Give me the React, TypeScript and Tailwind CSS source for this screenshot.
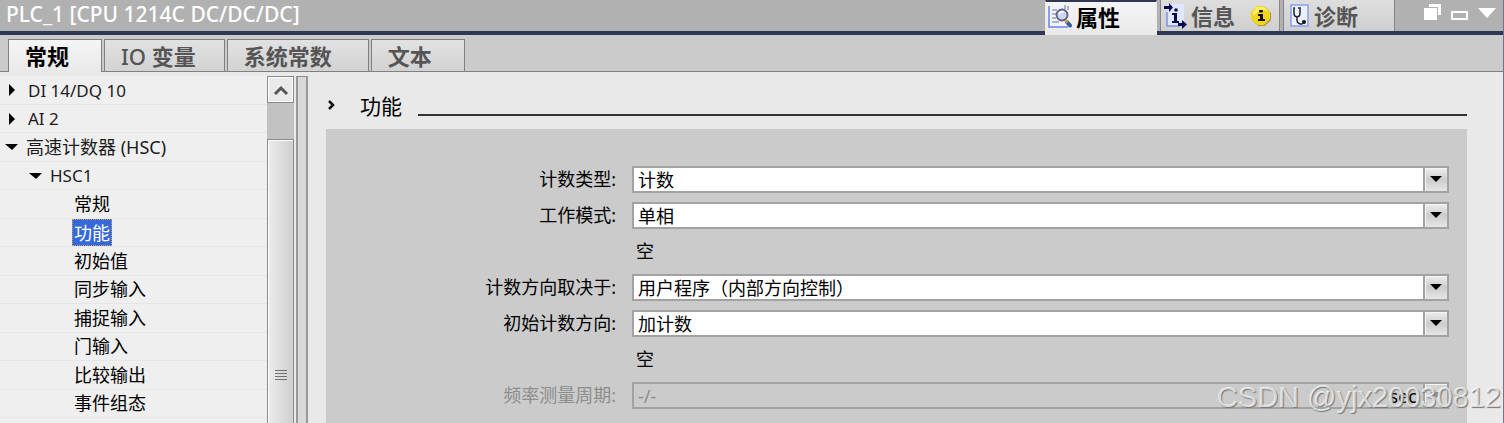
import React from 'react';
import clsx from 'clsx';

interface TreeItem {
  label: string;
  indent: string;
  arrow?: 'right' | 'down';
  latin?: boolean;
  selected?: boolean;
}

interface Field {
  id: string;
  label?: string;
  value: string;
  unit?: string;
  disabled?: boolean;
}

const pageTabs = [
  { label: '常规', padding: 'pl-4 pr-8', active: true },
  { label: 'IO 变量', padding: 'pl-4 pr-7' },
  { label: '系统常数', padding: 'pl-4 pr-9' },
  { label: '文本', padding: 'pl-4 pr-8' },
];

const treeItems: TreeItem[] = [
  { label: 'DI 14/DQ 10', indent: 'pl-2', arrow: 'right', latin: true },
  { label: 'AI 2', indent: 'pl-2', arrow: 'right', latin: true },
  { label: '高速计数器 (HSC)', indent: 'pl-1', arrow: 'down' },
  { label: 'HSC1', indent: 'pl-7', arrow: 'down', latin: true },
  { label: '常规', indent: 'pl-18' },
  { label: '功能', indent: 'pl-18', selected: true },
  { label: '初始值', indent: 'pl-18' },
  { label: '同步输入', indent: 'pl-18' },
  { label: '捕捉输入', indent: 'pl-18' },
  { label: '门输入', indent: 'pl-18' },
  { label: '比较输出', indent: 'pl-18' },
  { label: '事件组态', indent: 'pl-18' },
];

const fields: Field[] = [
  { id: 'count-type', label: '计数类型:', value: '计数' },
  { id: 'mode', label: '工作模式:', value: '单相' },
  { id: 'empty-1', value: '空' },
  { id: 'direction-source', label: '计数方向取决于:', value: '用户程序（内部方向控制）' },
  { id: 'initial-direction', label: '初始计数方向:', value: '加计数' },
  { id: 'empty-2', value: '空' },
  { id: 'period', label: '频率测量周期:', value: '-/-', unit: 'sec', disabled: true },
];

const PropertiesIcon = () => (
  <svg width="24" height="24" viewBox="0 0 24 24" className="shrink-0">
    <rect x="1" y="1" width="19" height="21" fill="#eef3ff" />
    <path d="M1 1v21h19" fill="none" stroke="#8b9cea" strokeWidth="2" />
    <path d="M4 5h5M4 9h4M4 13h4M4 17h7M17 0v4M20 1v4" stroke="#9a9fb4" strokeWidth="1.5" />
    <circle cx="14" cy="10" r="5.5" fill="#cfd6f0" stroke="#5d5f80" strokeWidth="1.8" />
    <path d="M11 9c1-2 3-3 5-2" fill="none" stroke="#fff" strokeWidth="1.5" />
    <path d="M19 17l3 3.500" stroke="#355c9c" strokeWidth="4" strokeLinecap="round" />
    <path d="M17.500 15.500l2 2" stroke="#d99a3c" strokeWidth="3" />
  </svg>
);

const InfoIcon = () => (
  <svg width="24" height="26" viewBox="0 0 24 26" className="shrink-0">
    <rect x="4" y="1" width="17" height="22" fill="#dfe7fc" />
    <path d="M4 9v14h13" fill="none" stroke="#7f92e4" strokeWidth="1.500" />
    <g fill="#0a0a50">
      <path d="M1 3h5V0l4 4.500L6 9V6H1z" />
      <path d="M15 20h4v-3l5 4.500-5 4.500v-3h-4z" />
      <path d="M9 10h5v8h2v2H9v-2h2v-6H9z" />
      <circle cx="13" cy="7" r="1.8" />
    </g>
  </svg>
);

const InfoBadge = () => (
  <svg width="20" height="20" viewBox="0 0 20 20" className="shrink-0">
    <path d="M7 1h7l6 6v7l-6 6H7l-6-6V7z" fill="#a89448" />
    <path d="M6 0h7l6 6v7l-6 6H6l-6-6V6z" fill="#f3d61c" />
    <path d="M6 1h7l4 4c-5-2-11 0-15 5V6z" fill="#fbee70" />
    <g fill="#111">
      <path d="M7 8h5v5h2v2H7v-2h2v-3H7z" />
      <rect x="8" y="4" width="4" height="2.500" rx="1" />
    </g>
  </svg>
);

const DiagnosticsIcon = () => (
  <svg width="20" height="24" viewBox="0 0 20 24" className="shrink-0">
    <rect x="1" y="1" width="17" height="21" fill="#eaf0ff" stroke="#8b9cea" strokeWidth="1.500" />
    <path d="M5 4H4v5c0 5 6 5 6 0V4H8M7 13v3c0 4 5 5 6 3" fill="none" stroke="#24242c" strokeWidth="1.500" />
    <circle cx="14" cy="18" r="2" fill="#111" />
  </svg>
);

const inspectorTabs = [
  { label: '属性', icon: <PropertiesIcon />, padding: 'pl-0.5 pr-9', active: true },
  { label: '信息', icon: <InfoIcon />, badge: <InfoBadge />, padding: 'pl-0.5 pr-2' },
  { label: '诊断', icon: <DiagnosticsIcon />, padding: 'pl-1.5 pr-9' },
];

const TreeArrow = ({ direction }: { direction: 'right' | 'down' }) => (
  <svg
    width={direction === 'right' ? 8 : 14}
    height="14"
    viewBox={direction === 'right' ? '0 0 8 14' : '0 0 14 14'}
    className={clsx('shrink-0', direction === 'right' ? 'mr-3' : 'mr-2')}
  >
    <path d={direction === 'right' ? 'M1 1l6 6-6 6z' : 'M1 4h13l-6 6z'} />
  </svg>
);

const TitleBar = () => (
  <header className="flex items-start justify-between border-b-4 border-[#2f3753] bg-[#b1b1b1]">
    <h1 className="pl-1.5 text-[21px] leading-7 font-medium whitespace-nowrap text-white">PLC_1 [CPU 1214C DC/DC/DC]</h1>
    <div className="flex">
      <nav className="flex gap-[3px]">
        {inspectorTabs.map((tab) => (
          <button
            key={tab.label}
            className={clsx(
              'flex items-center gap-1 border-x text-[22px] leading-6 font-bold whitespace-nowrap',
              tab.padding,
              tab.active
                ? '-mb-1 h-[35px] border-t-2 border-[#e9e9e9] border-t-[#2f3753] bg-linear-to-b from-[#f5f5f5] to-[#e9e9e9] pb-1 text-black'
                : 'h-[31px] border-[#858585] bg-linear-to-b from-[#dedede] to-[#cfcfcf] text-[#555]'
            )}
          >
            {tab.icon}
            {tab.label}
            {tab.badge && <span className="ml-3">{tab.badge}</span>}
          </button>
        ))}
      </nav>
      <div className="flex items-start gap-2 pt-1 pr-1.5 pl-7">
        <button aria-label="浮动">
          <svg width="20" height="18" viewBox="0 0 20 18">
            <path d="M6 0h12v11h-3V3H6z" fill="#fff" />
            <path d="M1 4h13v12H1z" fill="#fff" />
          </svg>
        </button>
        <button aria-label="最小化">
          <svg width="18" height="18" viewBox="0 0 18 18">
            <rect x="1" y="8" width="15" height="7" fill="#b1b1b1" stroke="#fff" strokeWidth="2" />
          </svg>
        </button>
        <button aria-label="折叠">
          <svg width="20" height="18" viewBox="0 0 20 18">
            <path d="M1 4h18l-9 10z" fill="#fff" />
          </svg>
        </button>
      </div>
    </div>
  </header>
);

const PageTabs = () => (
  <nav className="flex gap-0.5 border-b border-[#808080] bg-[#cbcbcb] pt-1 pl-2">
    {pageTabs.map((tab) => (
      <button
        key={tab.label}
        className={clsx(
          'h-8 border border-b-0 border-[#808080] text-[22px] leading-7 font-bold whitespace-nowrap',
          tab.padding,
          tab.active
            ? '-mb-px h-[33px] bg-linear-to-b from-[#f5f5f5] to-[#e9e9e9] text-black'
            : 'bg-linear-to-b from-[#e2e2e2] to-[#d2d2d2] text-[#555]'
        )}
      >
        {tab.label.startsWith('IO') ? (
          <>
            <span className="font-medium">IO</span> {tab.label.slice(3)}
          </>
        ) : (
          tab.label
        )}
      </button>
    ))}
  </nav>
);

const Sidebar = () => (
  <aside className="flex w-[308px] shrink-0 pt-1">
    <ul className="min-w-0 flex-1 bg-[#efefef]">
      {treeItems.map((item, index) => (
        <li
          key={index}
          className={clsx(
            'flex items-center border-b border-[#e6e6e6] odd:h-[29px] even:h-7',
            item.latin ? 'text-[17px]' : 'text-lg',
            item.indent
          )}
        >
          {item.arrow && <TreeArrow direction={item.arrow} />}
          <button
            className={clsx(
              'h-[27px] leading-[27px] whitespace-nowrap',
              item.selected && 'border border-dotted border-[#cfa060] bg-[#3568d8] px-px leading-6 text-white',
              !item.selected && (item.arrow ? 'text-[#1c1c1c]' : 'px-0.5 text-black')
            )}
          >
            {item.label}
          </button>
        </li>
      ))}
    </ul>
    <div className="flex w-[27px] flex-col bg-[#c2c2c2]">
      <button
        aria-label="向上滚动"
        className="flex h-[27px] shrink-0 items-center justify-center border border-[#8a8a8a] bg-[#eaeaea] shadow-[inset_0_0_0_1px_#fff]"
      >
        <svg width="16" height="12" viewBox="0 0 16 12">
          <path d="M2 10l6-6 6 6" fill="none" stroke="#555" strokeWidth="3" />
        </svg>
      </button>
      <div className="mt-9 flex flex-1 flex-col items-center border border-b-0 border-[#8a8a8a] bg-linear-to-r from-[#ececec] to-[#cfcfcf] pt-[229px] shadow-[inset_1px_1px_0_#fff]">
        <svg width="12" height="12" viewBox="0 0 12 12">
          <path d="M0 1.500h12M0 4.500h12M0 7.500h12M0 10.500h12" stroke="#707070" />
        </svg>
      </div>
    </div>
    <div className="ml-0.5 w-3 border-x-2 border-t border-x-[#999] border-t-[#888] bg-[#d8d8d8]" />
  </aside>
);

const FieldRow = ({ field }: { field: Field }) => (
  <div className="flex h-9 items-center text-lg leading-7">
    <div className="w-[291px] shrink-0 pr-4 text-right">
      {field.label && (
        <label htmlFor={field.id} className={field.disabled ? 'text-[#8d8d8d]' : 'text-black'}>
          {field.label}
        </label>
      )}
    </div>
    {field.label ? (
      <div
        className={clsx(
          'flex h-[27px] min-w-0 flex-1 border-2 border-[#a2a2a2]',
          field.disabled ? 'bg-[#cbcbcb]' : 'bg-white'
        )}
      >
        <select
          id={field.id}
          disabled={field.disabled}
          className={clsx(
            'min-w-0 flex-1 appearance-none pl-1 leading-6 outline-none',
            field.disabled ? 'text-[#8d8d8d] opacity-100' : 'text-black'
          )}
        >
          <option>{field.value}</option>
        </select>
        {field.unit && <span className="pr-1.5 leading-6 text-black">{field.unit}</span>}
        <span
          className={clsx(
            'pointer-events-none flex w-6 items-center justify-center border-l-2 border-[#a2a2a2] shadow-[inset_1px_1px_0_#f4f4f4]',
            field.disabled ? 'bg-[#d4d4d4]' : 'bg-linear-to-b from-[#efefef] via-[#cccccc] to-[#e6e6e6]'
          )}
        >
          <svg width="12" height="8" viewBox="0 0 12 8">
            <path d="M0 1h12L6 7z" fill={field.disabled ? '#8d8d8d' : '#000'} />
          </svg>
        </span>
      </div>
    ) : (
      <span className="pl-1">{field.value}</span>
    )}
  </div>
);

const FunctionPanel = () => (
  <main className="flex min-w-0 flex-1 flex-col pt-4 pr-9 pl-[18px]">
    <div className="flex h-[41px] shrink-0 items-start pl-0.5">
      <svg width="8" height="10" viewBox="0 0 8 10" className="mt-3 shrink-0">
        <path d="M1 1l4 4-4 4" fill="none" stroke="#111" strokeWidth="2.500" />
      </svg>
      <h2 className="pl-6 text-[21px] leading-9 text-black">功能</h2>
      <div className="ml-4 h-7 flex-1 border-b-2 border-[#333]" />
    </div>
    <section className="flex-1 bg-[#cbcbcb] pt-8 pr-[18px] pl-[15px]">
      {fields.map((field) => (
        <FieldRow key={field.id} field={field} />
      ))}
    </section>
  </main>
);

const App: React.FC = () => (
  <div className="relative h-screen overflow-hidden border-r border-[#70758a] bg-[#e9e9e9] font-['Noto_Sans','Noto_Sans_CJK_SC',sans-serif]">
    <div className="flex h-full flex-col">
      <TitleBar />
      <PageTabs />
      <div className="flex min-h-0 flex-1 overflow-hidden">
        <Sidebar />
        <FunctionPanel />
      </div>
    </div>
    {/* Watermark */}
    <span className="pointer-events-none absolute right-0.5 bottom-2 font-['Liberation_Sans',sans-serif] text-[29px] leading-9 text-white/70 [text-shadow:1px_1px_1px_#777]">
      CSDN @yjx20030812
    </span>
  </div>
);

export default App;
